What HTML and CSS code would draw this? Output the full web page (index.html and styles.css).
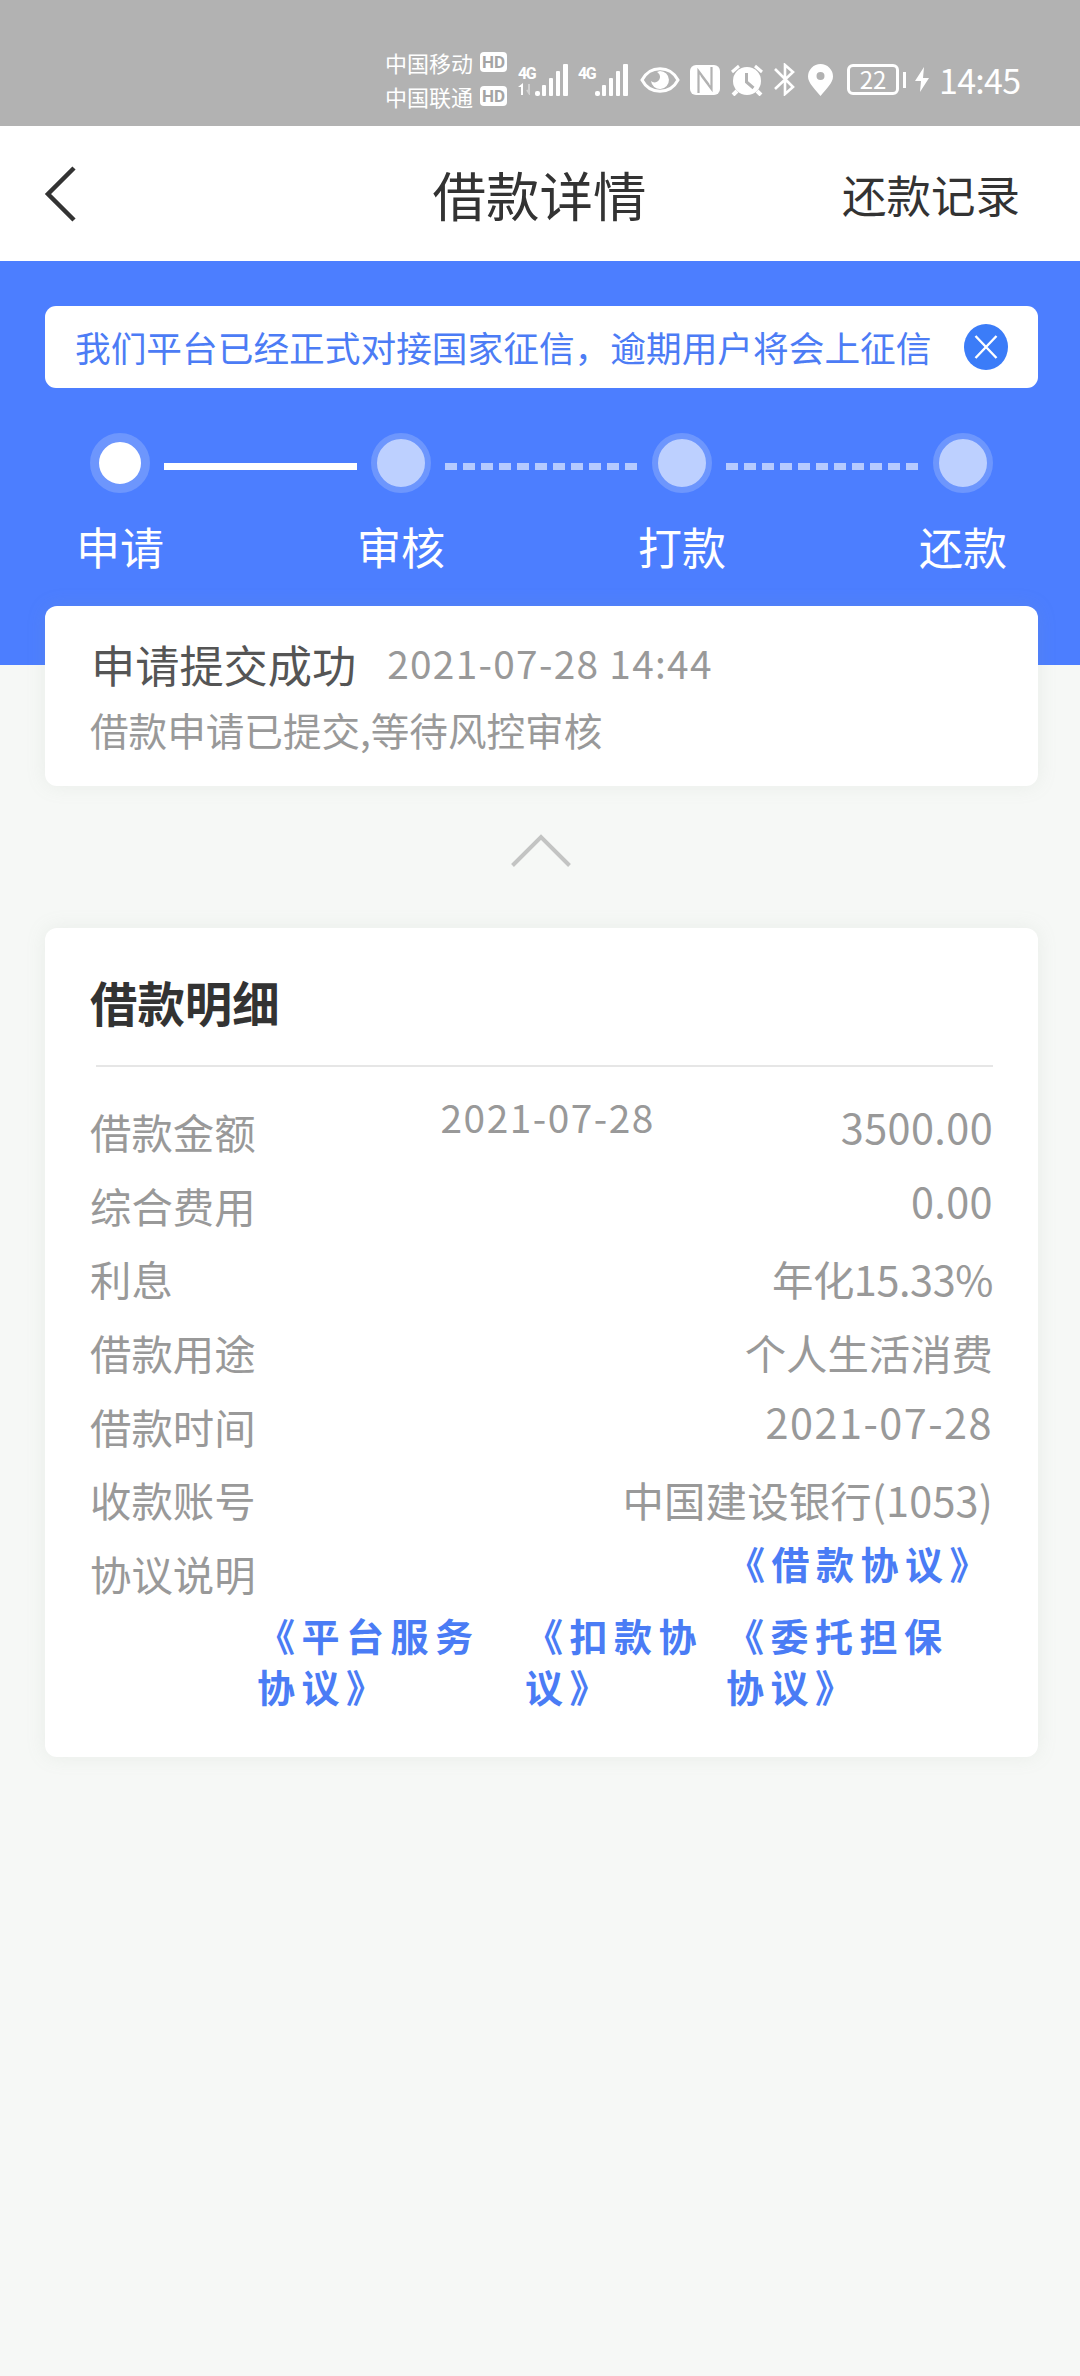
FILE: index.html
```html
<!doctype html>
<html lang="zh-CN">
<head>
    <meta charset="UTF-8">
    <title>借款详情</title>
    <link rel="stylesheet" href="styles.css">
</head>
<body>
    <div class="statusbar">
        <div class="carriers">
            <div class="carrier">中国移动<span class="hd">HD</span></div>
            <div class="carrier">中国联通<span class="hd">HD</span></div>
        </div>
        <div class="signal">
            <div class="net">4G
                <svg width="16" height="12" viewBox="0 0 16 12"><path d="M0 4l5-4v12H3V4z" fill="#fff"/><path d="M11 1v9l-2-3" fill="none" stroke="#fff" stroke-width="2" opacity=".4"/></svg>
            </div>
            <svg class="bars" width="33" height="32" viewBox="0 0 33 32" fill="#fff"><rect x="0" y="27" width="5" height="5" rx="2"/><rect x="7" y="21" width="4" height="11" rx="1"/><rect x="14" y="14" width="4" height="18" rx="1"/><rect x="21" y="7" width="4" height="25" rx="1"/><rect x="28" y="0" width="5" height="32" rx="1"/></svg>
        </div>
        <div class="signal second">
            <div class="net">4G</div>
            <svg class="bars" width="33" height="32" viewBox="0 0 33 32" fill="#fff"><rect x="0" y="27" width="5" height="5" rx="2"/><rect x="7" y="21" width="4" height="11" rx="1"/><rect x="14" y="14" width="4" height="18" rx="1"/><rect x="21" y="7" width="4" height="25" rx="1"/><rect x="28" y="0" width="5" height="32" rx="1"/></svg>
        </div>
        <svg class="eye" width="40" height="28" viewBox="0 0 40 28"><path d="M2 14C10-1 30-1 38 14 30 29 10 29 2 14z" fill="none" stroke="#fff" stroke-width="3"/><path d="M20 5a9 9 0 1 1-9 10c2 2 6 2 8-1 2-3 1-6-2-8z" fill="#fff"/></svg>
        <svg class="nfc" width="30" height="30" viewBox="0 0 30 30"><rect width="30" height="30" rx="6" fill="#fff"/><path d="M8.500 28V6l10 13.500M21.500 2v22l-10-13.500" fill="none" stroke="#b2b2b2" stroke-width="2.200"/></svg>
        <svg class="alarm" width="32" height="32" viewBox="0 0 32 32"><circle cx="16" cy="17" r="14" fill="#fff"/><path d="M1 8l7-6M31 8l-7-6" stroke="#fff" stroke-width="3"/><path d="M6 27l-4 4M26 27l4 4" stroke="#fff" stroke-width="4"/><path d="M15.500 9v9l7 6" fill="none" stroke="#b2b2b2" stroke-width="3"/></svg>
        <svg class="bt" width="23" height="33" viewBox="0 0 23 33"><path d="M2 6l18 18-8 7V2l8 7L2 26" fill="none" stroke="#fff" stroke-width="2.600"/></svg>
        <svg class="pin" width="25" height="32" viewBox="0 0 25 32"><path fill-rule="evenodd" d="M12.500 0A12.500 12.500 0 0 0 0 12.500C0 19 7 25 12.500 32 18 25 25 19 25 12.500A12.500 12.500 0 0 0 12.500 0zm0 8a4 4 0 1 1 0 8 4 4 0 0 1 0-8z" fill="#fff"/></svg>
        <div class="battery">22</div>
        <div class="nub"></div>
        <svg class="bolt" width="14" height="25" viewBox="0 0 14 25"><path d="M9 0L0 14h6L5 25l9-14H8z" fill="#fff"/></svg>
        <div class="time">14:45</div>
    </div>

    <header class="header">
        <svg class="back" width="34" height="58" viewBox="0 0 34 58"><path d="M31 3L5 29l26 26" fill="none" stroke="#333" stroke-width="4.500"/></svg>
        <h1>借款详情</h1>
        <a class="records">还款记录</a>
    </header>

    <div class="hero">
        <div class="notice">
            <p>我们平台已经正式对接国家征信，逾期用户将会上征信</p>
            <svg width="44" height="46" viewBox="0 0 44 46"><ellipse cx="22" cy="23" rx="22" ry="23" fill="#3b7cf8"/><path d="M11.500 12l21 22M32.500 12l-21 22" stroke="#fff" stroke-width="2.400"/></svg>
        </div>
        <ul class="steps">
            <li class="step active"><i class="dot"></i><span>申请</span></li>
            <li class="line solid"></li>
            <li class="step"><i class="dot"></i><span>审核</span></li>
            <li class="line"></li>
            <li class="step"><i class="dot"></i><span>打款</span></li>
            <li class="line"></li>
            <li class="step"><i class="dot"></i><span>还款</span></li>
        </ul>
    </div>

    <section class="card result">
        <div class="result-title"><span>申请提交成功</span><time>2021-07-28 14:44</time></div>
        <p>借款申请已提交,等待风控审核</p>
    </section>

    <div class="fold">
        <svg width="60" height="34" viewBox="0 0 60 34"><path d="M1.500 31.500L30 3l28.500 28.500" fill="none" stroke="#c3c4c3" stroke-width="4"/></svg>
    </div>

    <section class="card detail">
        <h2>借款明细</h2>
        <ul class="rows">
            <li><span>借款金额</span><time class="mid">2021-07-28</time><b class="num">3500.00</b></li>
            <li><span>综合费用</span><b class="num">0.00</b></li>
            <li><span>利息</span><b class="rate">年化15.33%</b></li>
            <li><span>借款用途</span><b>个人生活消费</b></li>
            <li><span>借款时间</span><b class="num date">2021-07-28</b></li>
            <li><span>收款账号</span><b class="bank">中国建设银行(1053)</b></li>
            <li><span>协议说明</span><a class="link first">《借款协议》</a></li>
        </ul>
        <div class="links">
            <a class="link">《平台服务<br>协议》</a>
            <a class="link">《扣款协<br>议》</a>
            <a class="link">《委托担保<br>协议》</a>
        </div>
    </section>
</body>
</html>
```

FILE: styles.css
```css
* {
    box-sizing: border-box;
}
body {
    margin: 0;
    width: 1080px;
    min-height: 2376px;
    background-color: #f6f8f6;
    font-family: "Noto Sans CJK SC", sans-serif;
    color: #999;
}
h1, h2, p, ul {
    margin: 0;
    padding: 0;
    font-weight: normal;
}
ul {
    list-style: none;
}
svg {
    display: block;
    flex: none;
}

/* status bar */
.statusbar {
    height: 126px;
    padding: 33px 0 0 385px;
    background-color: #b2b2b2;
    color: #fff;
    display: flex;
    align-items: center;
}
.carriers {
    margin-top: -2px;
}
.carrier {
    display: flex;
    align-items: center;
    height: 34px;
    font-size: 22px;
    line-height: 32px;
    white-space: nowrap;
}
.hd {
    width: 27px;
    height: 20px;
    margin-left: 7px;
    border-radius: 4px;
    background-color: #fff;
    color: #a4a4a4;
    font-family: Roboto, sans-serif;
    font-size: 17px;
    font-weight: bold;
    line-height: 20px;
    text-align: center;
}
.signal {
    display: flex;
    margin-left: 11px;
    height: 32px;
}
.signal.second {
    margin-left: 10px;
}
.net {
    width: 17px;
    font-family: Roboto, sans-serif;
    font-size: 16px;
    font-weight: bold;
    line-height: 19px;
    letter-spacing: -1.5px;
}
.eye {
    margin-left: 12px;
}
.nfc {
    margin-left: 10px;
}
.alarm {
    margin-left: 11px;
}
.bt {
    margin-left: 10px;
}
.pin {
    margin-left: 12px;
}
.battery {
    width: 52px;
    height: 31px;
    margin-left: 14px;
    border: 3px solid #fff;
    border-radius: 6px;
    font-size: 24px;
    line-height: 23px;
    text-align: center;
}
.nub {
    width: 3px;
    height: 16px;
    margin-left: 4px;
    background-color: #fff;
}
.bolt {
    margin-left: 9px;
}
.time {
    margin-left: 10px;
    font-size: 34px;
    line-height: 34px;
    letter-spacing: -0.7px;
}

/* header */
.header {
    height: 135px;
    padding: 0 60px 0 43px;
    background-color: #fff;
    color: #333;
    display: grid;
    grid-template-columns: 200px 1fr 200px;
    align-items: center;
}
.header h1 {
    font-size: 53.5px;
    line-height: 130px;
    text-align: center;
    padding-left: 16px;
}
.records {
    font-size: 44.5px;
    line-height: 130px;
    text-align: right;
}

.hero {
    height: 404px;
    padding: 45px 42px 0 45px;
    background-color: #4c7eff;
}
.notice {
    height: 82px;
    padding: 0 30px;
    border-radius: 11px;
    background-color: #fff;
    display: flex;
    align-items: center;
    justify-content: space-between;
}
.notice p {
    color: #4c7cf5;
    font-size: 35.7px;
    line-height: 80px;
    white-space: nowrap;
}
.steps {
    display: flex;
    padding: 45px 28px 0 29px;
}
.step {
    flex: none;
    width: 92px;
    text-align: center;
    color: #fff;
    font-size: 44px;
    line-height: 60px;
}
.step span {
    display: block;
    margin-top: 23px;
    white-space: nowrap;
}
.dot {
    display: block;
    width: 60px;
    height: 60px;
    margin: 0 auto;
    border: 6px solid #6d96fd;
    border-radius: 50%;
    background-color: #bdd0ff;
}
.active .dot {
    border-width: 9px;
    background-color: #fff;
}
.line {
    flex: none;
    width: 193px;
    height: 7px;
    margin: 30px -2px 0;
    background: repeating-linear-gradient(90deg, #b5caff 0, #b5caff 12px, transparent 12px, transparent 18px);
}
.line.solid {
    background: #fff;
}

.card {
    width: 993px;
    margin: 0 auto;
    margin-left: 45px;
    border-radius: 12px;
    background-color: #fff;
    box-shadow: 0 0 20px rgba(150, 165, 150, 0.13);
}
.result {
    height: 180px;
    margin-top: -59px;
    padding: 27px 45px 0;
}
.result-title {
    display: flex;
    color: #555;
    font-size: 44.2px;
    line-height: 62px;
    padding-left: 1px;
}
.result-title time {
    margin-left: 31px;
    color: #999;
    font-size: 38.8px;
    line-height: 58px;
    letter-spacing: 1.3px;
}
.result p {
    margin-top: 4px;
    font-size: 38.6px;
    line-height: 60px;
}
.fold {
    height: 142px;
    padding: 48px 0 0 2px;
    display: flex;
    justify-content: center;
}

.detail {
    height: 829px;
    padding: 37px 45px 0;
}
.detail h2 {
    height: 100px;
    color: #333;
    font-size: 47.4px;
    font-weight: bold;
    line-height: 74px;
}
.rows {
    padding-top: 30px;
    background: linear-gradient(#e6e6e6, #e6e6e6) 6px 0 / 100% 2px no-repeat;
}
.rows li {
    display: flex;
    height: 73.7px;
    font-size: 41.4px;
    line-height: 73.7px;
    white-space: nowrap;
}
.rows b {
    margin-left: auto;
    font-weight: normal;
}
.rows .num {
    line-height: 63px;
    letter-spacing: 0.4px;
}
.rows .date {
    letter-spacing: 1.5px;
}
.rows .rate {
    letter-spacing: -0.4px;
}
.rows .bank {
    letter-spacing: 0.2px;
}
.mid {
    margin-left: 185px;
    font-size: 38.8px;
    line-height: 42px;
    letter-spacing: 1.5px;
}
.link {
    color: #4a7cf5;
    font-size: 38px;
    font-weight: bold;
    line-height: 51.5px;
    letter-spacing: 6.5px;
}
.link.first {
    margin-left: auto;
    margin-right: -1px;
}
.links {
    display: grid;
    grid-template-columns: 268px 201px auto;
    margin: -2px 0 0 167px;
    white-space: nowrap;
}
```
